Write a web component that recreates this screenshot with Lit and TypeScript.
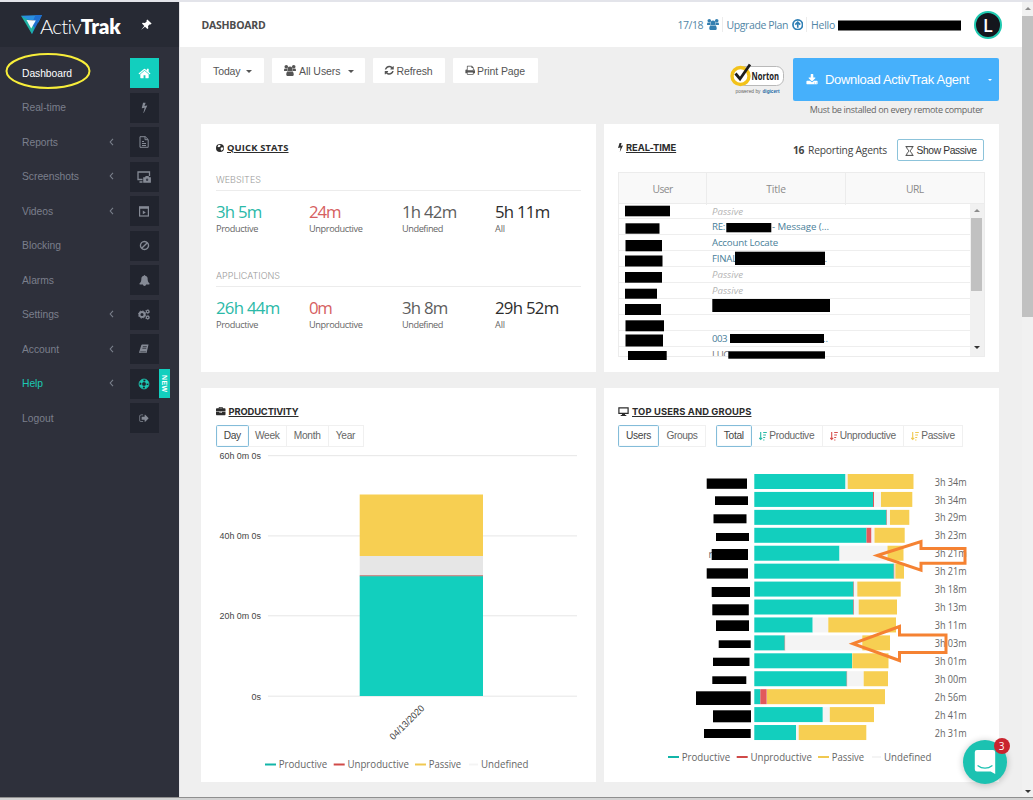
import { LitElement, html, svg, css } from "lit";
import { customElement } from "lit/decorators.js";

const TEAL = "#12cfbe";
const RED = "#e2595b";
const YELLOW = "#f7cf52";
const PALE = "#f4f4f4";

// Label with a known advance width; tracking is computed once rendered.
const t = (text: string, w: number, cls = "") =>
  html`<span class="t ${cls}" data-w=${w}>${text}</span>`;

const ICONS: Record<string, string> = {
  home: "M1472 992v480q0 26-19 45t-45 19h-384v-384h-256v384h-384q-26 0-45-19t-19-45v-480q0-1 .5-3t.5-3l575-474 575 474q1 2 1 6zm223-69l-62 74q-8 9-21 11h-3q-13 0-21-7l-692-577-692 577q-12 8-24 7-13-2-21-11l-62-74q-8-10-7-23.5t11-21.5l719-599q32-26 76-26t76 26l244 204v-195q0-14 9-23t23-9h192q14 0 23 9t9 23v408l219 182q10 8 11 21.5t-7 23.5z",
  bolt: "M1333 566q18 20 7 44l-540 1157q-13 25-42 25-4 0-14-2-17-5-25.5-19t-4.5-30l197-808-406 101q-4 1-12 1-18 0-31-11-18-15-13-39l201-825q4-14 16-23t28-9h328q19 0 32 12.5t13 29.5q0 8-5 18l-171 463 396-98q8-2 12-2 19 0 34 15z",
  download: "M1344 1344q0-26-19-45t-45-19-45 19-19 45 19 45 45 19 45-19 19-45zm256 0q0-26-19-45t-45-19-45 19-19 45 19 45 45 19 45-19 19-45zm128-224v320q0 40-28 68t-68 28h-1472q-40 0-68-28t-28-68v-320q0-40 28-68t68-28h465l135 136q58 56 136 56t136-56l136-136h464q40 0 68 28t28 68zm-325-569q17 41-14 70l-448 448q-18 19-45 19t-45-19l-448-448q-31-29-14-70 17-39 59-39h256v-448q0-26 19-45t45-19h256q26 0 45 19t19 45v448h256q42 0 59 39z",
  refresh: "M1639 1056q0 5-1 7-64 268-268 434.5t-478 166.5q-146 0-282.5-55t-243.5-157l-129 129q-19 19-45 19t-45-19-19-45v-448q0-26 19-45t45-19h448q26 0 45 19t19 45-19 45l-137 137q71 66 161 102t187 36q134 0 250-65t186-179q11-17 53-117 8-23 30-23h192q13 0 22.5 9.5t9.5 22.5zm25-800v448q0 26-19 45t-45 19h-448q-26 0-45-19t-19-45 19-45l138-138q-148-137-349-137-134 0-250 65t-186 179q-11 17-53 117-8 23-30 23h-199q-13 0-22.5-9.5t-9.5-22.5v-7q65-268 270-434.5t480-166.5q146 0 284 55.5t245 156.5l130-129q19-19 45-19t45 19 19 45z",
  print: "M448 1536h896v-256h-896v256zm0-640h896v-384h-160q-40 0-68-28t-28-68v-160h-640v640zm1152 64q0-26-19-45t-45-19-45 19-19 45 19 45 45 19 45-19 19-45zm128 0v416q0 13-9.5 22.5t-22.5 9.5h-224v160q0 40-28 68t-68 28h-960q-40 0-68-28t-28-68v-160h-224q-13 0-22.5-9.5t-9.5-22.5v-416q0-79 56.5-135.5t135.5-56.5h64v-544q0-40 28-68t68-28h672q40 0 88 20t76 48l152 152q28 28 48 76t20 88v256h64q79 0 135.5 56.5t56.5 135.5z",
  bell: "M1728 1408q0 52-38 90t-90 38h-448q0 106-75 181t-181 75-181-75-75-181h-448q-52 0-90-38t-38-90q50-42 91-88t85-119.5 74.5-158.5 50-206 19.5-260q0-152 117-282.5t307-158.5q-8-19-8-39 0-40 28-68t68-28 68 28 28 68q0 20-8 39 190 28 307 158.5t117 282.5q0 139 19.5 260t50 206 74.5 158.5 85 119.5 91 88z",
  ban: "M1440 893q0-161-87-295l-754 753q137 89 297 89 111 0 211.5-43.5t173.5-116.5 116-174.5 43-212.5zm-999 299l755-754q-135-91-300-91-148 0-273 73t-198 199-73 274q0 162 89 299zm1223-299q0 157-61 300t-163.5 246-245 164-298.5 61-298.5-61-245-164-163.5-246-61-300 61-299.5 163.5-245.5 245-164 298.5-61 298.5 61 245 164 163.5 245.5 61 299.5z",
  logout: "M704 1440q0 4 1 20t.5 26.5-3 23.5-10 19.5-20.5 6.5h-320q-119 0-203.5-84.5t-84.5-203.5v-704q0-119 84.5-203.5t203.5-84.5h320q13 0 22.5 9.5t9.5 22.5q0 4 1 20t.5 26.5-3 23.5-10 19.5-20.5 6.5h-320q-66 0-113 47t-47 113v704q0 66 47 113t113 47h312l11.5 1 11.5 3 8 5.5 7 9 2 13.5zm928-544q0 26-19 45l-544 544q-19 19-45 19t-45-19-19-45v-288h-448q-26 0-45-19t-19-45v-384q0-26 19-45t45-19h448v-288q0-26 19-45t45-19 45 19l544 544q19 19 19 45z",
  briefcase: "M640 256h512v-128h-512v128zm1152 640v480q0 66-47 113t-113 47h-1472q-66 0-113-47t-47-113v-480h672v160q0 26 19 45t45 19h320q26 0 45-19t19-45v-160h672zm-768 0v128h-256v-128h256zm768-480v384h-1792v-384q0-66 47-113t113-47h352v-160q0-40 28-68t68-28h576q40 0 68 28t28 68v160h352q66 0 113 47t47 113z",
};

const fa = (name: string, size: number) =>
  html`<svg class="ico" width=${size} height=${size} viewBox="0 0 1792 1792"><path fill="currentColor" d=${ICONS[name]} /></svg>`;

const ico = (w: number, h: number, box: string, body: unknown) =>
  html`<svg class="ico" width=${w} height=${h} viewBox=${box}>${body}</svg>`;

const group = (w: number) => ico(w, w * 0.92, "0 0 24 22", svg`
  <g fill="currentColor"><circle cx="12" cy="8" r="5"/><circle cx="4.600" cy="3.700" r="3.600"/><circle cx="19.400" cy="3.700" r="3.600"/>
  <path d="M4.500 19.500c0-4.500 1.500-7 3.500-7 2 1.600 6 1.600 8 0 2 0 3.500 2.500 3.500 7 0 1.500-1 2.500-2.500 2.500H7c-1.500 0-2.500-1-2.500-2.500z"/>
  <path d="M0 11.500C0 9 .5 7 1.800 7c1.500 1 3 1.200 4.600.6.100 2 .8 3.500 1.200 4.500H2c-1.200 0-2 0-2-.6zM24 11.500c0-2.500-.5-4.500-1.800-4.500-1.500 1-3 1.200-4.600.6-.1 2-.8 3.500-1.200 4.500H22c1.200 0 2 0 2-.6z"/></g>`);

const caret = html`<i class="caret"></i>`;

const navIcons: Record<string, unknown> = {
  home: fa("home", 13),
  bolt: fa("bolt", 11),
  file: ico(10, 12, "0 0 10 12", svg`<g fill="none" stroke="currentColor"><path d="M1 .7h5.300L9.200 3.500v7.800H1z"/><path d="M6 .7v3h3M3 5.500h2M3 7.500h4M3 9.500h4"/></g>`),
  shot: ico(14, 12, "0 0 14 12", svg`<path d="M5.500 8.500H1V1h11.500v4M2.500 11h3" fill="none" stroke="currentColor" stroke-width="1.300"/><path fill="currentColor" d="M6.200 6.200h1.800l.7-1.200h2.800l.7 1.200h1.700v5.500H6.200z"/><circle cx="10.100" cy="8.800" r="1.200" fill="#3a3f4a"/>`),
  video: ico(10, 11, "0 0 10 11", svg`<rect x=".6" y="1" width="8.800" height="9" fill="none" stroke="currentColor" stroke-width="1.200"/><path fill="currentColor" d="M0 .5h10v2.200H0zM3.800 4.600l3 1.800-3 1.800z"/>`),
  ban: fa("ban", 11),
  bell: fa("bell", 11),
  gears: ico(12, 11, "0 0 12 11", svg`<g fill="none" stroke="currentColor"><circle cx="4" cy="5.500" r="2.500" stroke-width="1.900"/><circle cx="4" cy="5.500" r="3.600" stroke-width="1" stroke-dasharray="1.400 1.430"/><circle cx="9.600" cy="2.600" r="1.300" stroke-width="1.100"/><circle cx="9.600" cy="2.600" r="2.100" stroke-width=".7" stroke-dasharray="1.100 1.100"/><circle cx="9.600" cy="8.400" r="1.300" stroke-width="1.100"/><circle cx="9.600" cy="8.400" r="2.100" stroke-width=".7" stroke-dasharray="1.100 1.100"/></g>`),
  book: ico(10, 10, "0 0 11 10", svg`<path fill="currentColor" d="M3.500 0h7l-.3 1.500L8.300 9.500H1.200C.3 9.500 0 8.700.3 8L2.500 1C2.700.3 3 0 3.500 0z"/><path d="M4.200 2.400h4.300M3.700 4.200H8M1.400 8.200h6.200" stroke="#22252f" stroke-width=".8"/>`),
  ring: ico(12, 12, "0 0 12 12", svg`<g fill="none" stroke="currentColor"><circle cx="6" cy="6" r="4.900" stroke-width=".9"/><circle cx="6" cy="6" r="2.400" stroke-width=".8"/><circle cx="6" cy="6" r="3.600" stroke-width="2.400" stroke-dasharray="3.600 2.055" stroke-dashoffset="-1"/></g>`),
  logout: fa("logout", 10.5),
};

const NAV: [string, number, string, boolean, string][] = [
  ["Dashboard", 50, "home", false, "on"],
  ["Real-time", 44, "bolt", false, ""],
  ["Reports", 36, "file", true, ""],
  ["Screenshots", 57, "shot", true, ""],
  ["Videos", 31, "video", true, ""],
  ["Blocking", 39, "ban", false, ""],
  ["Alarms", 32, "bell", false, ""],
  ["Settings", 37, "gears", true, ""],
  ["Account", 37, "book", true, ""],
  ["Help", 21, "ring", true, "help"],
  ["Logout", 31.5, "logout", false, ""],
];

const STATS: [string, number, [string, number, string][]][] = [
  ["WEBSITES", 45, [["3h 5m", 45.5, "p"], ["24m", 31.5, "u"], ["1h 42m", 54.5, "n"], ["5h 11m", 54.5, "a"]]],
  ["APPLICATIONS", 64, [["26h 44m", 63.5, "p"], ["0m", 22.5, "u"], ["3h 8m", 45.5, "n"], ["29h 52m", 63.5, "a"]]],
];
const STAT_LABELS: [string, number][] = [["Productive", 42], ["Unproductive", 53.5], ["Undefined", 41], ["All", 10]];

const ROWS: unknown[] = [
  t("Passive", 31, "passive"),
  html`<span>${t("RE:", 13)}</span><span class="tail">${t("- Message (...", 57)}</span>`,
  t("Account Locate", 66),
  html`${t("FINAL", 25)}<span class="dot">.</span>`,
  t("Passive", 31, "passive"),
  t("Passive", 31, "passive"),
  "",
  "",
  html`${t("003", 15)}<span class="dots">..</span>`,
  html`<span class="dim">${t("LUC", 17)}</span>`,
];

// Segment end positions: productive, unproductive, undefined, passive.
const USERS: [number, number, number, number, string][] = [
  [845.5, 845.5, 847.7, 913.5, "3h 34m"],
  [873, 874, 881, 912.3, "3h 34m"],
  [886.5, 887, 890, 909.3, "3h 29m"],
  [866.5, 871.5, 874.5, 904.7, "3h 23m"],
  [839.5, 839.5, 887.5, 903.5, "3h 21m"],
  [893.8, 894.5, 895.3, 904, "3h 21m"],
  [853.5, 854, 857.3, 900.7, "3h 18m"],
  [853.4, 854, 858.7, 897, "3h 13m"],
  [812.7, 812.7, 828.3, 896, "3h 11m"],
  [784.7, 785.3, 862.3, 890, "3h 03m"],
  [852, 852, 852.3, 888.5, "3h 01m"],
  [846.7, 847.3, 863.7, 888, "3h 00m"],
  [760.3, 766.8, 767, 885, "2h 56m"],
  [822.8, 822.8, 829.8, 874, "2h 41m"],
  [796, 796, 798.7, 866.3, "2h 31m"],
];

const REDACTED: [number, number, number, number][] = [
  [838, 20.5, 123, 10],
  [625, 205.7, 45, 10.6], [625.5, 223.3, 34, 10.4], [625.5, 240, 36.5, 11.3], [625, 255.5, 37.5, 11], [625, 272, 37, 10.7],
  [625, 288.7, 32, 10], [625, 304, 36, 11], [625.5, 320.3, 38.5, 11], [625.5, 334.5, 37.5, 12], [628, 351, 38.7, 9],
  [726.3, 223, 45, 9.3], [735, 251.7, 90, 13.3], [712.3, 299, 117.7, 13], [730, 334, 94, 9], [728.3, 351.3, 96.7, 7.4],
  [706.7, 478.5, 40.3, 10.3], [715, 496.3, 33, 8.7], [713.5, 514.3, 33, 9], [716, 533, 33, 8], [711.7, 549, 36.3, 11], [706.7, 568.3, 41.3, 10.3],
  [711.7, 587, 38.3, 10], [712.3, 604.3, 36.5, 11], [716, 620.3, 33, 10.7], [718.7, 640.3, 32, 7.7], [713, 657.7, 36.5, 8.3], [712.3, 676.3, 34, 7.7],
  [696, 691.3, 54.7, 13.7], [713, 710.3, 38, 12], [704, 729, 46.7, 9],
];

const LEGEND: [string, number, string][] = [
  ["Productive", 48.5, "#12b5a8"], ["Unproductive", 61.5, "#d04a48"], ["Passive", 32.5, "#f0c850"], ["Undefined", 47.5, "#f4f4f4"],
];
const LEGEND_X = [0, 68.7, 150, 204];

const legend = (x: number, y: number) => LEGEND.map(([label, w, color], i) => svg`
  <line x1=${x + LEGEND_X[i]} x2=${x + LEGEND_X[i] + (i === 3 ? 9 : 11)} y1=${y} y2=${y} stroke=${color} stroke-width="2"/>
  <text class="seg" x=${x + LEGEND_X[i] + (i === 3 ? 12 : 13.7)} y=${y + 3.6} font-size="10.5" fill="#666" textLength=${w} lengthAdjust="spacingAndGlyphs">${label}</text>`);

const sortIcon = (color: string) => ico(8, 10, "0 0 8 10", svg`<g stroke=${color} fill="none"><path d="M1.700 1v7M.2 6.800l1.500 1.700 1.500-1.700M4.200 1.500h3.600M4.200 4h2.800M4.200 6.500h2M4.200 9h1.200" stroke-width="1.100"/></g>`);

@customElement("app-root")
export class AppRoot extends LitElement {
  static styles = css`
    :host { display: block; width: 1033px; height: 800px; overflow: hidden; position: relative; background: #fff; font-family: "Liberation Sans", Arial, sans-serif; color: #666; }
    * { box-sizing: border-box; }
    .t { display: inline-block; white-space: nowrap; }
    .ico { display: block; flex: none; }
    .seg { font-family: "Open Sans", "Noto Sans", sans-serif; }
    .shell { display: grid; grid-template-columns: 179px 843px 11px; height: 797px; border-top: 2px solid #e3e4ea; }
    .foot { height: 3px; background: #d2d2d2; border-top: 1.500px solid #8f8f8f; }
    .side { background: #2e303b; }
    .brand { height: 45px; background: #272a34; display: flex; align-items: center; padding-left: 21px; color: #fff; font-family: Lato, sans-serif; font-size: 20.5px; }
    .brand .mark { margin-top: -1px; }
    .brand .name { display: flex; margin-left: -2px; padding-top: 3px; line-height: 24px; }
    .light { font-weight: 300; }
    .bold { font-weight: 800; }
    .pin { margin-left: 20px; }
    .nav { padding-top: 11px; display: grid; grid-auto-rows: 34.550px; }
    .item { display: grid; grid-template-columns: 87px 21px 28.500px 11px; padding-left: 22px; height: 30px; align-items: center; font-size: 10.300px; color: #7b7f8c; }
    .item .box { height: 30px; background: #21242e; display: grid; place-items: center; color: #858a95; }
    .item .ico { margin: auto; }
    .item.on { color: #fff; }
    .item.on .box { background: #12cfbe; color: #fff; }
    .item.help, .item.help .box { color: #1cc9b4; }
    .new { height: 29px; background: #12cfbe; color: #fff; font-size: 7px; font-weight: 700; writing-mode: vertical-rl; display: grid; place-items: center; letter-spacing: 0.400px; }
    .main { background: #efefef; border-left: 1px solid #e6e6e9; }
    .top { height: 45px; background: #fff; display: flex; align-items: center; padding: 0 20px 0 21.500px; font-family: "Open Sans", sans-serif; font-size: 10.500px; color: #5286a6; }
    .crumb { font-size: 10.500px; font-weight: 700; color: #4c4c4c; margin-right: auto; }
    .top .bar { width: 1px; height: 15px; background: #ececec; margin: 0 4px 0 3px; }
    .top .ico { margin-left: 3.500px; color: #347fb0; }
    .avatar { width: 28px; height: 28px; border-radius: 50%; background: #14161d; border: 2px solid #1fc9b0; color: #fff; font: 600 18px/24px "Open Sans", sans-serif; text-align: center; margin-left: 139px; }
    .content { padding: 11px 23px 0 21px; }
    .tools { display: flex; height: 66px; align-items: flex-start; gap: 8px; }
    .btn { height: 25px; background: #fff; border-radius: 1px; display: flex; align-items: center; font-size: 10.500px; color: #555; gap: 4px; padding: 0 12px; flex: none; }
    .btn.b1 { width: 63px; gap: 3px; } .btn.b2 { width: 93px; gap: 3px; } .btn.b3 { width: 72px; gap: 2px; padding: 0 11px; } .btn.b4 { width: 85px; gap: 2px; padding: 0 11.500px; }
    .b2 .caret { margin-left: 4px; }
    .caret { display: block; border: 3px solid transparent; border-top-color: currentColor; border-bottom: 0; margin: 1px 0 0 2px; }
    .norton { margin: 3px 0 0 auto; }
    .dl { width: 206px; text-align: center; }
    .dlbtn { height: 43px; border-radius: 2px; background: #46b0fb; color: #fff; display: flex; align-items: center; padding: 0 7px 0 13px; font-size: 13px; gap: 7px; }
    .dlbtn .caret { margin-left: auto; border-width: 2.500px; border-bottom: 0; }
    .note { font: 9px/16px "Open Sans", sans-serif; color: #666; display: block; padding: 1px 0 0 1px; }
    .cards { display: grid; grid-template-columns: 395px 395px; gap: 16px 8px; grid-template-rows: 248px 394px; }
    .card { background: #fff; padding: 15px; }
    .card.r { padding-left: 14px; }
    .head { display: flex; align-items: center; height: 17px; gap: 3px; color: #2c2c2c; }
    .head .h { font: 700 9.400px/12px Inter, sans-serif; text-decoration: underline; text-underline-offset: 1px; text-decoration-thickness: 1px; }
    .head .h.os { font-family: "Open Sans", sans-serif; }
    .sec { font: 300 9px/14px Inter, sans-serif; color: #999; height: 18px; border-bottom: 1px solid #ececec; margin: 16.500px 0 7px; }
    .sec.two { margin-top: 0; }
    .stats { display: grid; grid-template-columns: repeat(4, 93px); height: 71px; }
    .num { font: 16.800px/27px "Open Sans", sans-serif; display: block; }
    .lab { font: 9.200px/10px "Open Sans", sans-serif; color: #666; display: block; margin-top: -1px; }
    .num.p { color: #2bb9a8; } .num.u { color: #d6605f; } .num.n { color: #5d5d5d; } .num.a { color: #2d2d2d; }
    .rt { justify-content: space-between; height: 22px; }
    .rt .left { display: flex; gap: 3px; align-items: center; height: 17px; align-self: flex-start; }
    .rt .right { display: flex; align-items: center; gap: 10px; font: 10.300px/20px "Open Sans", sans-serif; color: #444; }
    .agents { display: flex; gap: 4px; margin-top: -1px; }
    .show { width: 87px; height: 22px; border: 1.500px solid #8cc3da; border-radius: 2px; font: 10.300px/18px "Liberation Sans", sans-serif; display: flex; align-items: center; gap: 2.500px; padding: 1px 7px 0; color: #333; }
    .table { margin-top: 10.500px; height: 185px; border: 1px solid #ececec; overflow: hidden; width: 366.500px; }
    .thead { display: grid; grid-template-columns: 87px 139px 1fr; height: 31px; background: #f9f9f9; border-bottom: 1px solid #ececec; font: 10.300px/32px "Open Sans", sans-serif; color: #8b8b8b; text-align: center; }
    .thead div + div { border-left: 1px solid #ececec; }
    .tbody { display: grid; grid-template-columns: 1fr 14px; }
    .rows { height: 153px; }
    .row { height: 15.950px; border-bottom: 1px solid #eeeeee; padding-left: 93px; display: flex; font: 9.700px/15px "Open Sans", sans-serif; color: #4a8099; }
    .passive { font-style: italic; color: #b5b5b5; }
    .tail { margin-left: 47px; } .dot { margin-left: 87.500px; } .dots { margin-left: 96px; } .dim { color: #777; }
    .vs { background: #f1f1f1; height: 152px; display: flex; flex-direction: column; align-items: center; }
    .vs .thumb { width: 11px; height: 73px; background: #c1c1c1; margin-top: 6px; }
    .up, .down { border: 3px solid transparent; }
    .up { border-bottom-color: #8c8c8c; border-top: 0; margin-top: 5px; }
    .down { border-top-color: #333; border-bottom: 0; margin-top: auto; margin-bottom: 7px; }
    .tabs { display: flex; height: 22.500px; margin-top: 4.500px; font-size: 10.200px; color: #666; }
    .tab { display: flex; align-items: center; justify-content: center; gap: 2px; border: 1px solid #f0f0f0; border-left: 0; height: 22.500px; flex: none; }
    .tab.sel { border: 1.500px solid #84bcd9; border-radius: 1.500px; color: #444; box-shadow: inset 0 0 1px #9fd0e6; }
    .tabs .sp { width: 9.500px; }
    .chart { display: block; overflow: visible; }
    .ax { font-family: "Liberation Sans", Arial, sans-serif; }
    .page-vs { background: #f1f1f1; display: flex; flex-direction: column; align-items: center; }
    .page-vs .thumb { width: 11px; height: 301px; background: #c1c1c1; margin-top: 6px; }
    .page-vs .down { margin-bottom: 4px; }
    .over { position: absolute; inset: 0; pointer-events: none; }
    .chat { position: absolute; left: 963px; top: 739.500px; width: 44px; height: 44px; border-radius: 50%; background: #1cc2b1; box-shadow: 0 1px 6px 1px rgba(0,0,0,.18); display: grid; place-items: center; }
    .badge { position: absolute; left: 993.500px; top: 737.500px; width: 16px; height: 16px; border-radius: 50%; background: #c9242e; color: #fff; font: 10px/16px "Open Sans", sans-serif; text-align: center; }
  `;

  firstUpdated() {
    this.renderRoot.querySelectorAll<HTMLElement>(".t").forEach((el) => {
      const target = Number(el.dataset.w);
      const range = document.createRange();
      range.selectNodeContents(el);
      const width = range.getBoundingClientRect().width;
      const n = (el.textContent ?? "").length;
      el.style.letterSpacing = `${(target - width) / n}px`;
    });
  }

  private sidebar() {
    return html`<aside class="side">
      <div class="brand">
        <svg class="mark" width="21" height="19" viewBox="0 0 21 19">
          <path d="M0 .8 21 0 17.500 7.500 14 5.200 4.500 4.800z" fill="#2a8fe0"/>
          <path d="M14.500 0H21L11 19 8.500 14z" fill="#1f6fd0"/>
          <path d="M0 .8 11 19 13.500 12.500 6.500 4.500z" fill="#1fb2a4"/>
          <path d="M5.500 4.900 14.800 5.400 10.200 13.500z" fill="#f4fbff"/>
        </svg>
        <div class="name">${t("Activ", 41, "light")}${t("Trak", 40, "bold")}</div>
        <svg class="pin" width="11" height="11" viewBox="0 0 11 11"><path fill="#fff" d="M6.300.4 10.600 4.600 9.600 5.500 8.900 5.200 7 7.100 7.300 9.300 6.400 10 4 7.700.6 10.600.4 10.400 3.300 7 1 4.600 1.700 3.800 4 4.100 5.800 2.200 5.500 1.300z"/></svg>
      </div>
      <nav class="nav">
        ${NAV.map(([label, w, icon, sub, cls]) => html`<div class="item ${cls}">
          ${t(label, w)}
          <span>${sub ? html`<svg width="5" height="8" viewBox="0 0 5 8"><path d="M4 .8 1.200 4 4 7.200" fill="none" stroke="#7b808c" stroke-width="1.100"/></svg>` : ""}</span>
          <span class="box">${navIcons[icon]}</span>
          ${cls === "help" ? html`<span class="new">NEW</span>` : ""}
        </div>`)}
      </nav>
    </aside>`;
  }

  private topbar() {
    return html`<header class="top">
      ${t("DASHBOARD", 64, "crumb")}
      ${t("17/18", 25.5)}${group(12)}<i class="bar"></i>
      ${t("Upgrade Plan", 61.5)}
      ${ico(11.5, 11.5, "0 0 12 12", svg`<circle cx="6" cy="6" r="5" fill="none" stroke="#2f7fb5" stroke-width="1.800"/><path d="M6 9.200V3.200M3.400 5.900 6 3.300l2.600 2.600" fill="none" stroke="#2f7fb5" stroke-width="1.700"/>`)}
      <i class="bar"></i>${t("Hello", 24)}
      <div class="avatar">L</div>
    </header>`;
  }

  private tools() {
    return html`<div class="tools">
      <div class="btn b1">${t("Today", 27.5)}${caret}</div>
      <div class="btn b2">${group(12)}${t("All Users", 41.5)}${caret}</div>
      <div class="btn b3">${fa("refresh", 10.5)}${t("Refresh", 36)}</div>
      <div class="btn b4">${fa("print", 10.5)}${t("Print Page", 48)}</div>
      <svg class="norton" width="55" height="34" viewBox="0 0 55 34">
        <rect x="8" y="5.500" width="45.500" height="19" rx="7" fill="#fff" stroke="#b9b9b9"/>
        <circle cx="10.500" cy="15" r="8.500" fill="#fff" stroke="#f2c21a" stroke-width="3.400"/>
        <path d="M5.500 12.500 10 18 20 3.500" fill="none" stroke="#1d1d1d" stroke-width="2.800"/>
        <text class="seg" x="21.500" y="19.200" font-size="10" font-weight="700" fill="#222" textLength="27.500" lengthAdjust="spacingAndGlyphs">Norton</text>
        <text class="ax" x="5.500" y="31.500" font-size="5.800" fill="#666" textLength="25" lengthAdjust="spacingAndGlyphs">powered by</text>
        <text class="ax" x="32.500" y="31.500" font-size="6" font-weight="700" fill="#1c6aa5" textLength="17" lengthAdjust="spacingAndGlyphs">digicert</text>
      </svg>
      <div class="dl">
        <div class="dlbtn">${fa("download", 12)}${t("Download ActivTrak Agent", 144)}${caret}</div>
        <span class="note">${t("Must be installed on every remote computer", 173.5)}</span>
      </div>
    </div>`;
  }

  private quickStats() {
    return html`<section class="card">
      <div class="head">
        ${ico(8, 8, "0 0 16 16", svg`<circle cx="8" cy="8" r="8" fill="#2c2c2c"/><path d="M5 1.500 9 2 8.500 5 6 6.500 3 5.500zM10 7h5l-1 4-3.500 2.500L9 10z" fill="#fff"/>`)}
        ${t("QUICK STATS", 61.5, "h os")}
      </div>
      ${STATS.map(([title, w, nums], i) => html`
        <div class="sec ${i ? "two" : ""}">${t(title, w)}</div>
        <div class="stats">${nums.map(([v, nw, c], k) => html`<div>
          <span class="num ${c}">${t(v, nw)}</span><span class="lab">${t(STAT_LABELS[k][0], STAT_LABELS[k][1])}</span>
        </div>`)}</div>`)}
    </section>`;
  }

  private realTime() {
    return html`<section class="card r">
      <div class="head rt">
        <div class="left">${ico(5, 9, "0 0 5 9", svg`<path fill="#2c2c2c" d="M1.600 0h2L2.800 2.800 5 2.400 1.800 9l.7-4.600L0 5z"/>`)}${t("REAL-TIME", 50, "h")}</div>
        <div class="right"><span class="agents"><b>${t("16", 11)}</b>${t("Reporting Agents", 79)}</span>
          <div class="show">${ico(9, 10, "0 0 9 10", svg`<path d="M.5.600h8M.5 9.400h8M1.600.8C1.600 3 3.800 4 3.800 5S1.600 7 1.600 9.200M7.400.8C7.400 3 5.200 4 5.200 5s2.200 2 2.200 4.200" fill="none" stroke="#333" stroke-width=".9"/>`)}${t("Show Passive", 60)}</div>
        </div>
      </div>
      <div class="table">
        <div class="thead"><div>${t("User", 20)}</div><div>${t("Title", 19.5)}</div><div>${t("URL", 17.5)}</div></div>
        <div class="tbody">
          <div class="rows">${ROWS.map((r) => html`<div class="row">${r}</div>`)}</div>
          <div class="vs"><i class="up"></i><i class="thumb"></i><i class="down"></i></div>
        </div>
      </div>
    </section>`;
  }

  private tab(label: unknown, width: number, sel = false) {
    return html`<div class="tab ${sel ? "sel" : ""}" style="width:${width}px">${label}</div>`;
  }

  private productivity() {
    const grid: [number, string, number][] = [[455.7, "60h 0m 0s", 41.5], [535.9, "40h 0m 0s", 41.5], [615.8, "20h 0m 0s", 41.5], [696.2, "0s", 9.5]];
    return html`<section class="card">
      <div class="head">${fa("briefcase", 9.5)}${t("PRODUCTIVITY", 70, "h")}</div>
      <div class="tabs">${this.tab(t("Day", 17), 32.5, true)}${this.tab(t("Week", 24.5), 38.5)}${this.tab(t("Month", 27), 41.5)}${this.tab(t("Year", 19.5), 35)}</div>
      <svg class="chart" width="365" height="330" viewBox="216 447 365 330">
        ${grid.map(([y, label, w]) => svg`<line x1="268" x2="577" y1=${y} y2=${y} stroke="#e6e6e6"/>
          <text class="ax" x=${261 - w} y=${y + 3.3} font-size="9.600" fill="#444" textLength=${w} lengthAdjust="spacingAndGlyphs">${label}</text>`)}
        <rect x="359.700" y="494.500" width="123.300" height="61.500" fill=${YELLOW}/>
        <rect x="359.700" y="556" width="123.300" height="20" fill="#e6e6e6"/>
        <rect x="359.700" y="576" width="123.300" height="120" fill=${TEAL}/>
        <rect x="359.700" y="575" width="123.300" height="1.300" fill="#c98f8c"/>
        <text class="ax" x="393.500" y="740.500" transform="rotate(-45 393.500 740.500)" font-size="9.600" fill="#444" textLength="44.500" lengthAdjust="spacingAndGlyphs">04/13/2020</text>
        ${legend(265, 764.5)}
      </svg>
    </section>`;
  }

  private topUsers() {
    return html`<section class="card r">
      <div class="head">
        ${ico(11, 9, "0 0 11 9", svg`<path d="M.9.900h9.200v5.500H.9z" fill="none" stroke="#2c2c2c" stroke-width="1.200"/><path fill="#2c2c2c" d="M4.300 6.500h2.400l.5 1.500H8.300v.9H2.700V8h1.100z"/>`)}
        ${t("TOP USERS AND GROUPS", 119.5, "h")}
      </div>
      <div class="tabs">
        ${this.tab(t("Users", 25), 41, true)}${this.tab(t("Groups", 31), 47)}<span class="sp"></span>
        ${this.tab(t("Total", 20), 36.5, true)}
        ${this.tab(html`${sortIcon("#27b9a6")}${t("Productive", 45)}`, 70.5)}
        ${this.tab(html`${sortIcon("#d6504e")}${t("Unproductive", 56)}`, 81.5)}
        ${this.tab(html`${sortIcon("#f0c850")}${t("Passive", 33.5)}`, 59)}
      </div>
      <svg class="chart" width="365" height="330" viewBox="618 447 365 330">
        ${USERS.map(([a, b, c, d, label], i) => {
          const y = 474 + i * 17.93;
          const seg = (x1: number, x2: number, color: string) =>
            svg`<rect x=${x1} y=${y} width=${Math.max(0, x2 - x1)} height="15" fill=${color}/>`;
          return svg`${seg(754.3, a, TEAL)}${seg(a, b, RED)}${seg(b, c, PALE)}${seg(c, d, YELLOW)}
            <text class="seg" x="934.700" y=${y + 11.6} font-size="10.200" fill="#666" textLength="32" lengthAdjust="spacingAndGlyphs">${label}</text>`;
        })}
        <text class="seg" x="708.500" y="557.500" font-size="10" fill="#666">r</text>
        ${legend(668, 757)}
      </svg>
    </section>`;
  }

  render() {
    return html`
      <div class="shell">
        ${this.sidebar()}
        <main class="main">
          ${this.topbar()}
          <div class="content">
            ${this.tools()}
            <div class="cards">${this.quickStats()}${this.realTime()}${this.productivity()}${this.topUsers()}</div>
          </div>
        </main>
        <div class="page-vs"><i class="up"></i><i class="thumb"></i><i class="down"></i></div>
      </div>
      <div class="foot"></div>
      <svg class="over" width="1033" height="800" viewBox="0 0 1033 800">
        ${REDACTED.map(([x, y, w, h]) => svg`<rect x=${x} y=${y} width=${w} height=${h} fill="#000"/>`)}
        <ellipse cx="48" cy="71" rx="41.500" ry="17" fill="none" stroke="#f8ee3a" stroke-width="2"/>
        <g fill="none" stroke="#f58232" stroke-width="3">
          <path d="M877.300 555.500 921 541.500V548.500H965V563.300H921V570.200z"/>
          <path d="M853 643.700 899.500 626.500V635H946V652.500H899.500V660.500z"/>
        </g>
      </svg>
      <div class="chat"><svg width="22" height="26" viewBox="0 0 22 26"><path fill="#fff" d="M3 1h16a2.200 2.200 0 0 1 2.200 2.200V25l-4.500-2.500H3A2.200 2.200 0 0 1 .8 20.300V3.200A2.200 2.200 0 0 1 3 1z"/><path d="M4 16.800c4 3.200 10 3.200 14 0" fill="none" stroke="#1cc2b1" stroke-width="1.300" stroke-linecap="round"/></svg></div>
      <div class="badge">3</div>`;
  }
}
